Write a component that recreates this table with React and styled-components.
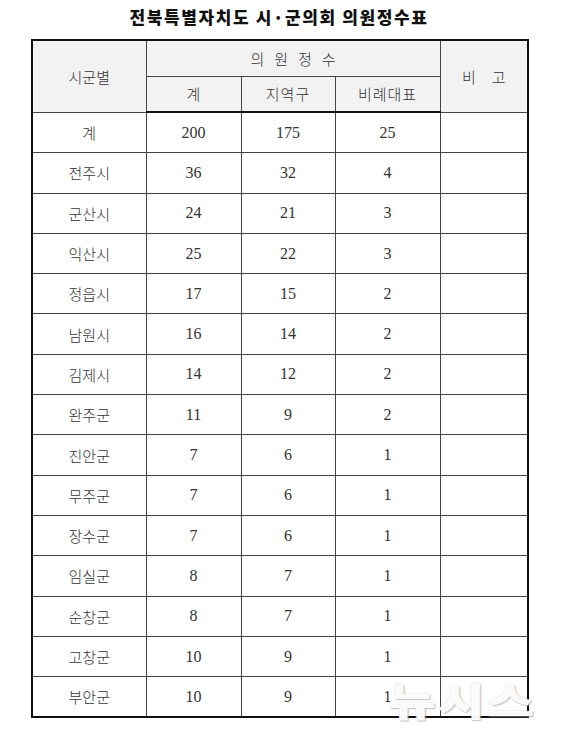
import React from "react";
import styled, { createGlobalStyle } from "styled-components";

const GlobalStyle = createGlobalStyle`
    html, body {
        margin: 0;
        padding: 0;
        background: #ffffff;
    }
`;

const Page = styled.div`
    position: relative;
    width: 563px;
    height: 747px;
    padding: 6px 0 0 31px;
    box-sizing: border-box;
    background: #ffffff;
    overflow: hidden;
`;

const Sheet = styled.div`
    width: 496px;
    display: flex;
    flex-direction: column;
    gap: 11px;
`;

const Title = styled.h1`
    margin: 0;
    height: 22px;
    line-height: 22px;
    text-align: center;
    font-family: "Noto Sans CJK KR", "Noto Sans", sans-serif;
    font-size: 17px;
    font-weight: 900;
    letter-spacing: 1.6px;
    color: #111;
`;

const Table = styled.table`
    width: 496px;
    border-collapse: collapse;
    table-layout: fixed;
    border: 2px solid #111;
`;

const Cell = styled.td`
    border: 1px solid #444;
    height: 39.3px;
    padding: 0;
    white-space: nowrap;
    text-align: center;
    vertical-align: middle;
    color: #333;
    font-size: ${(p) => (p.$num ? 16 : 15)}px;
    font-family: ${(p) =>
        p.$num
            ? `"Liberation Serif", "Noto Sans CJK KR", serif`
            : `"Noto Sans CJK KR", sans-serif`};
    font-weight: ${(p) => (p.$num ? 400 : 300)};
    letter-spacing: ${(p) => p.$ls || 0}px;
`;

const HeadCell = styled(Cell).attrs({ as: "th" })`
    background: #f2f2f2;
    font-weight: 300;
    height: 34.5px;
`;

const HeadRow = styled.tr`
    &.last th {
        border-bottom: 2px solid #111;
    }
`;

// 글자 사이 간격을 벌린 제목 (의 원 정 수, 비 고)
const Spaced = styled.span`
    display: inline-flex;
    gap: ${(p) => p.$gap}px;
`;

// 뉴시스 워터마크
const Watermark = styled.div`
    position: absolute;
    left: 388px;
    top: 677px;
    font-family: "Noto Sans CJK KR", sans-serif;
    font-size: 40px;
    font-weight: 900;
    letter-spacing: 1px;
    line-height: 46px;
    transform: scale(1.3, 0.97);
    transform-origin: left top;
    color: rgba(255, 255, 255, 0.94);
    text-shadow: 1px 1px 1px rgba(150, 150, 150, 0.5),
        0 0 2px rgba(170, 170, 170, 0.45);
`;

const rows = [
    ["계", 200, 175, 25],
    ["전주시", 36, 32, 4],
    ["군산시", 24, 21, 3],
    ["익산시", 25, 22, 3],
    ["정읍시", 17, 15, 2],
    ["남원시", 16, 14, 2],
    ["김제시", 14, 12, 2],
    ["완주군", 11, 9, 2],
    ["진안군", 7, 6, 1],
    ["무주군", 7, 6, 1],
    ["장수군", 7, 6, 1],
    ["임실군", 8, 7, 1],
    ["순창군", 8, 7, 1],
    ["고창군", 10, 9, 1],
    ["부안군", 10, 9, 1],
];

const spread = (text, gap) => (
    <Spaced $gap={gap}>
        {[...text].map((ch, i) => (
            <span key={i}>{ch}</span>
        ))}
    </Spaced>
);

export default function App() {
    return (
        <>
            <GlobalStyle />
            <Page>
                <Sheet>
                    <Title>전북특별자치도 시·군의회 의원정수표</Title>
                    <Table>
                        <colgroup>
                            <col style={{ width: 114 }} />
                            <col style={{ width: 95 }} />
                            <col style={{ width: 94 }} />
                            <col style={{ width: 105 }} />
                            <col style={{ width: 88 }} />
                        </colgroup>
                        <thead>
                            <HeadRow>
                                <HeadCell rowSpan={2}>시군별</HeadCell>
                                <HeadCell colSpan={3}>{spread("의원정수", 10)}</HeadCell>
                                <HeadCell rowSpan={2}>{spread("비고", 16)}</HeadCell>
                            </HeadRow>
                            <HeadRow className="last">
                                <HeadCell>계</HeadCell>
                                <HeadCell $ls={1}>지역구</HeadCell>
                                <HeadCell $ls={1}>비례대표</HeadCell>
                            </HeadRow>
                        </thead>
                        <tbody>
                            {rows.map(([name, total, local, pr]) => (
                                <tr key={name}>
                                    <Cell>{name}</Cell>
                                    <Cell $num>{total}</Cell>
                                    <Cell $num>{local}</Cell>
                                    <Cell $num>{pr}</Cell>
                                    <Cell />
                                </tr>
                            ))}
                        </tbody>
                    </Table>
                </Sheet>
                <Watermark>뉴시스</Watermark>
            </Page>
        </>
    );
}
